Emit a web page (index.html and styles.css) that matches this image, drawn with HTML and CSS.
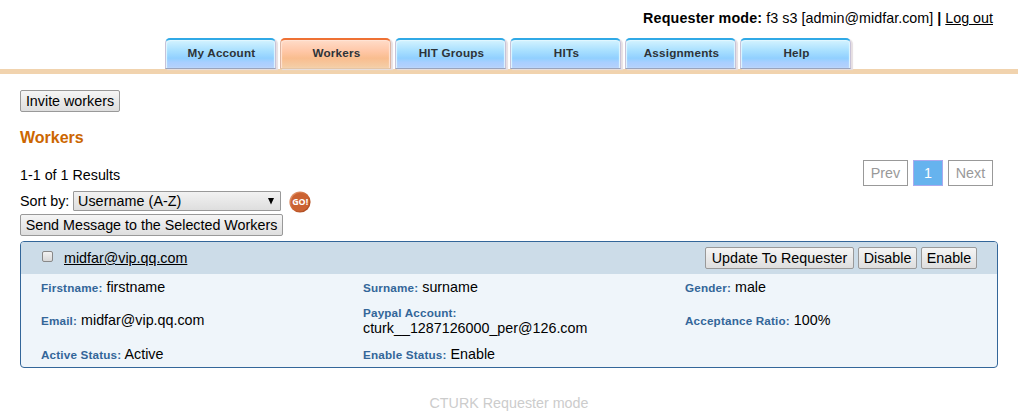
FILE: index.html
```html
<!DOCTYPE html>
<html lang="en">
<head>
<meta charset="utf-8">
<title>Workers</title>
<link rel="stylesheet" href="styles.css">
</head>
<body>
<header class="account"><b class="mode">Requester mode:</b><span class="who">f3 s3 [admin@midfar.com]</span><b class="bar">|</b><a class="logout" href="#">Log out</a></header>
<nav class="tabs">
  <a class="tab" href="#">My Account</a>
  <a class="tab active" href="#">Workers</a>
  <a class="tab" href="#">HIT Groups</a>
  <a class="tab" href="#">HITs</a>
  <a class="tab" href="#">Assignments</a>
  <a class="tab" href="#">Help</a>
</nav>
<main class="content">
  <button class="btn invite">Invite workers</button>
  <h1 class="title">Workers</h1>
  <div class="results">
    <span class="count">1-1 of 1 Results</span>
    <div class="pager"><span class="page">Prev</span><span class="page current">1</span><span class="page">Next</span></div>
  </div>
  <div class="sort">
    <label class="sort-label" for="sort">Sort by:</label>
    <div class="select-wrap">
      <select class="select" id="sort"><option>Username (A-Z)</option></select>
      <svg class="arrow" width="6" height="7" viewBox="0 0 6 7"><path d="M0 0H6L3 6.5Z"/></svg>
    </div>
    <svg class="go" width="22" height="22" viewBox="0 0 22 22">
      <defs><linearGradient id="rim" x1="0" y1="0" x2="1" y2="1"><stop offset="0" stop-color="#eba57f"/><stop offset=".5" stop-color="#cb6433"/><stop offset="1" stop-color="#9f421b"/></linearGradient></defs>
      <circle cx="11" cy="11" r="10.6" fill="url(#rim)"/>
      <circle cx="11" cy="11" r="9.2" fill="#cb6231"/>
      <text class="go-text" x="3.2" y="14" textLength="16" lengthAdjust="spacingAndGlyphs">GO!</text>
    </svg>
  </div>
  <button class="btn send">Send Message to the Selected Workers</button>
  <section class="card">
    <div class="card-head">
      <input class="check" type="checkbox" aria-label="Select worker">
      <a class="name" href="#">midfar@vip.qq.com</a>
      <div class="actions"><button class="btn update">Update To Requester</button><button class="btn disable">Disable</button><button class="btn enable">Enable</button></div>
    </div>
    <div class="details">
      <div class="field"><b class="label">Firstname:</b> firstname</div>
      <div class="field"><b class="label">Surname:</b> surname</div>
      <div class="field"><b class="label">Gender:</b> male</div>
      <div class="field"><b class="label">Email:</b> midfar@vip.qq.com</div>
      <div class="field stacked"><b class="label">Paypal Account:</b><span>cturk__1287126000_per@126.com</span></div>
      <div class="field"><b class="label">Acceptance Ratio:</b> 100%</div>
      <div class="field"><b class="label">Active Status:</b> Active</div>
      <div class="field"><b class="label">Enable Status:</b> Enable</div>
    </div>
  </section>
</main>
<footer class="footer">CTURK Requester mode</footer>
</body>
</html>
```
FILE: styles.css
```css
* { box-sizing: border-box; }
body {
  margin: 0;
  height: 416px;
  overflow: hidden;
  background: #fff;
  color: #000;
  font: 14.3px/16px "Liberation Sans", Arial, sans-serif;
  white-space: nowrap;
}
a { color: inherit; }
.account { display: flex; justify-content: flex-end; gap: 4px; height: 38px; padding: 10px 25px 0 0; }
.mode { letter-spacing: .16px; }
.who { letter-spacing: .03px; }
.tabs { display: flex; gap: 5px; height: 36px; padding-left: 165px; border-bottom: 5px solid #f1d3ae; }
.tab {
  width: 111px;
  height: 31px;
  margin-right: -1px;
  padding-left: 2px;
  border: 1px solid #c8c2d8;
  border-top: 2px solid #30a9e6;
  border-bottom: 1px solid #9aa4bd;
  border-radius: 5px 5px 0 0;
  background: linear-gradient(#d4f3ff 0, #a9e0ff 38%, #91d0ff 65%, #a9cfff 80%, #b6d1fb 100%);
  box-shadow: inset 1px 1px 1px #e2f7ff, inset -1px 0 1px #e2f7ff, 2px 1px 1px #e6dfe2;
  color: #2d3338;
  font-size: 11.7px;
  font-weight: bold;
  line-height: 25px;
  letter-spacing: .2px;
  text-align: center;
  text-decoration: none;
}
.tab.active {
  border-color: #ee7134 #ddb5a2 #e5c5a5;
  background: linear-gradient(#ffdcc9 0, #ffc7a7 40%, #f9bd8f 65%, #f4cfa8 100%);
  box-shadow: inset 1px 1px 1px #ffe4d5, inset -1px 0 1px #ffe4d5, 2px 1px 1px #e6dfe2;
}
.content { padding: 16px 20px 0; }
.btn {
  display: block;
  height: 22px;
  padding: 0;
  border: 1px solid #999;
  border-radius: 2px;
  background: linear-gradient(#f5f5f5, #dedede);
  color: #000;
  font: inherit;
  line-height: 20px;
}
.invite { width: 100px; }
.title { margin: 17px 0 0; color: #cc6600; font-size: 16px; line-height: 18px; }
.results { display: flex; justify-content: space-between; height: 44px; padding: 13px 5px 0 0; }
.count { padding-top: 7px; }
.pager { display: flex; gap: 5px; }
.page { width: 45px; height: 26px; border: 1px solid #999; color: #999; line-height: 24px; text-align: center; }
.page.current { width: 30px; border-color: #aaaaee; background: #66b3ee; color: #fff; }
.sort { display: flex; height: 23px; }
.sort-label { width: 53px; padding-top: 2px; }
.select-wrap { position: relative; width: 208px; height: 20px; }
.select {
  display: block;
  width: 208px;
  height: 20px;
  padding: 0 4px;
  border: 1px solid #999;
  border-radius: 1px;
  background: linear-gradient(#f2f2f2, #dedede);
  color: #000;
  font: inherit;
  line-height: 18px;
  letter-spacing: .07px;
  appearance: none;
}
.arrow { position: absolute; right: 7px; top: 7px; }
.go { margin-left: 8px; }
.go-text { fill: #fff; font: bold 9.5px "Open Sans", sans-serif; }
.send { width: 263px; }
.card { width: 978px; height: 127px; margin-top: 5px; overflow: hidden; border: 1px solid #336699; border-radius: 4px; background: #eff5fa; }
.card-head { display: flex; height: 32px; padding: 5px 20px 0; background: #ccdce8; }
.check { width: 11px; height: 11px; margin: 4px 11px 0 1px; border: 1px solid #888; border-radius: 2px; background: linear-gradient(#f2f2f2, #d8d8d8); appearance: none; }
.name { padding-top: 3px; }
.actions { display: flex; gap: 4px; margin-left: auto; }
.update { width: 149px; letter-spacing: .04px; }
.disable { width: 59px; }
.enable { width: 56px; }
.details { display: grid; grid-template-columns: 322px 322px 1fr; grid-template-rows: 27px 39px 28px; padding-left: 20px; }
.field { align-self: center; }
.label { color: #336699; font-size: 11.7px; letter-spacing: .17px; }
.stacked { display: flex; flex-direction: column; line-height: 15px; }
.stacked .label { margin: -1px 0 1px; }
.footer { padding-top: 27px; color: #ccc; text-align: center; }
```
